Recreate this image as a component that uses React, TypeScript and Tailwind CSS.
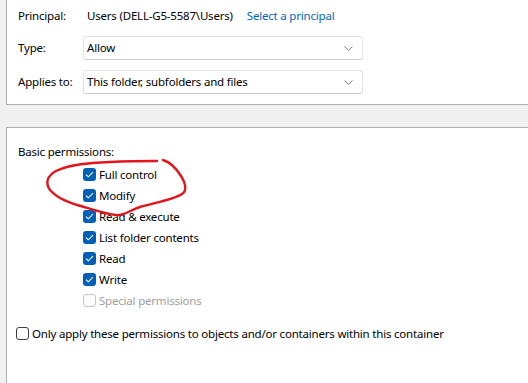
import React from 'react';

const perms = [
  { label: 'Full control', checked: true },
  { label: 'Modify', checked: true },
  { label: 'Read & execute', checked: true },
  { label: 'List folder contents', checked: true },
  { label: 'Read', checked: true },
  { label: 'Write', checked: true },
  { label: 'Special permissions', checked: false, disabled: true },
];

const Check = ({ checked, disabled }: { checked: boolean; disabled?: boolean }) =>
  checked ? (
    <span className="w-[13px] h-[13px] rounded-[3px] bg-[#005fb8] flex items-center justify-center shrink-0">
      <svg width="9" height="7" viewBox="0 0 9 7" fill="none">
        <path d="M1 3.6 L3.3 5.8 L8 1.2" stroke="#fff" strokeWidth="1.1" />
      </svg>
    </span>
  ) : (
    <span
      className={`w-[13px] h-[13px] rounded-[3px] border shrink-0 ${
        disabled ? 'border-[#c6c6c6] bg-[#fbfbfb]' : 'border-[#3d3d3d] bg-white'
      }`}
    />
  );

const Dropdown = ({ value }: { value: string }) => (
  <div className="w-[280px] h-[24px] bg-white border border-[#e3e3e3] border-b-[#cfcfcf] rounded-[3px] flex items-center pl-[3px] pr-[9px]">
    <span className="flex-1">{value}</span>
    <svg width="9" height="5" viewBox="0 0 9 5" fill="none">
      <path d="M0.5 0.5 L4.5 4.3 L8.5 0.5" stroke="#6b6b6b" strokeWidth="0.9" />
    </svg>
  </div>
);

export default function App() {
  return (
    <div
      className="relative w-[528px] h-[383px] overflow-hidden bg-[#f0f0f0] pl-[6px] text-[11.5px] tracking-[-0.2px] text-black"
      style={{ fontFamily: '"Segoe UI", "Noto Sans", sans-serif' }}
    >
      {/* Top panel */}
      <div className="bg-white border-l border-b border-[#adadad] h-[105px] pl-[11px] pt-[6px] flex flex-col">
        <div className="h-[20px] flex items-center">
          <span className="w-[65px]">Principal:</span>
          <span className="ml-[4px]">Users (DELL-G5-5587\Users)</span>
          <span className="ml-[14px] text-[#0067c0]">Select a principal</span>
        </div>
        <div className="mt-[10px] flex items-center">
          <span className="w-[65px]">Type:</span>
          <Dropdown value="Allow" />
        </div>
        <div className="mt-[10px] flex items-center">
          <span className="w-[65px]">Applies to:</span>
          <Dropdown value="This folder, subfolders and files" />
        </div>
      </div>

      {/* Permissions panel */}
      <div className="mt-[22px] bg-white border-l border-t border-[#adadad] h-[300px] pt-[13px]">
        <div className="h-[21px] flex items-center pl-[11px]">Basic permissions:</div>
        <div className="mt-[2px] pl-[76px] flex flex-col">
          {perms.map((p) => (
            <div key={p.label} className="h-[21px] flex items-center gap-[3px]">
              <Check checked={p.checked} disabled={p.disabled} />
              <span className={p.disabled ? 'text-[#a0a0a0]' : ''}>{p.label}</span>
            </div>
          ))}
        </div>
        <div className="mt-[12px] pl-[9px] h-[21px] flex items-center gap-[3px]">
          <Check checked={false} />
          <span>Only apply these permissions to objects and/or containers within this container</span>
        </div>
      </div>

      {/* Red hand-drawn annotation */}
      <svg className="absolute left-0 top-0 pointer-events-none" width="528" height="383" fill="none">
        <path
          d="M163 160 C170 162 176 168 181 176 C186 184 187 191 182 194 C175 199 158 202 140 207 C130 210 124 216 116 215 C106 214 98 211 84 207 C70 203 58 199 50 190 C45 183 47 176 56 171 C70 164 90 163 110 162 C130 161 145 161 157 161"
          stroke="#e3141c"
          strokeWidth="2.4"
          strokeLinecap="round"
          strokeLinejoin="round"
        />
      </svg>
    </div>
  );
}
